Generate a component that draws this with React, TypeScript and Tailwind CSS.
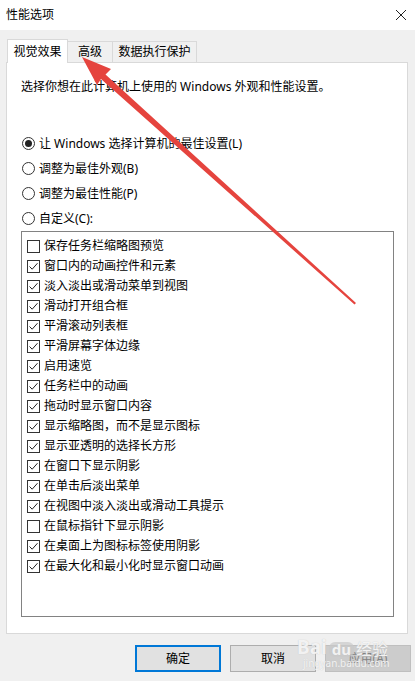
import React from "react";

const items: [string, boolean][] = [
  ["保存任务栏缩略图预览", false],
  ["窗口内的动画控件和元素", true],
  ["淡入淡出或滑动菜单到视图", true],
  ["滑动打开组合框", true],
  ["平滑滚动列表框", true],
  ["平滑屏幕字体边缘", true],
  ["启用速览", true],
  ["任务栏中的动画", true],
  ["拖动时显示窗口内容", true],
  ["显示缩略图，而不是显示图标", true],
  ["显示亚透明的选择长方形", true],
  ["在窗口下显示阴影", true],
  ["在单击后淡出菜单", true],
  ["在视图中淡入淡出或滑动工具提示", true],
  ["在鼠标指针下显示阴影", false],
  ["在桌面上为图标标签使用阴影", true],
  ["在最大化和最小化时显示窗口动画", true],
];

const radios: [string, boolean][] = [
  ["让 Windows 选择计算机的最佳设置(L)", true],
  ["调整为最佳外观(B)", false],
  ["调整为最佳性能(P)", false],
  ["自定义(C):", false],
];

function Radio({ checked }: { checked: boolean }) {
  return (
    <span className="flex h-[13px] w-[13px] items-center justify-center rounded-full border border-[#333]">
      {checked && <span className="h-[7px] w-[7px] rounded-full bg-[#222]" />}
    </span>
  );
}

function Checkbox({ checked }: { checked: boolean }) {
  return (
    <span className="flex h-[13px] w-[13px] shrink-0 items-center justify-center border border-[#333] bg-white">
      {checked && (
        <svg width="11" height="11" viewBox="0 0 11 11">
          <path d="M1.5 5.5 L4.2 8.2 L9.5 2.2" fill="none" stroke="#222" strokeWidth="1" />
        </svg>
      )}
    </span>
  );
}

export default function App() {
  return (
    <div className="relative h-[681px] w-[415px] overflow-hidden bg-[#f0f0f0] font-['Noto_Sans','Noto_Sans_CJK_SC',sans-serif] text-[12px] text-black">
      {/* title bar */}
      <div className="flex h-[30px] items-center justify-between bg-white pl-[6px] pr-[8px]">
        <span className="leading-none">性能选项</span>
        <svg width="12" height="12" viewBox="0 0 12 12">
          <path d="M1 1 L11 11 M11 1 L1 11" stroke="#222" strokeWidth="1" />
        </svg>
      </div>

      {/* tabs */}
      <div className="mt-[9px] flex h-[23px] items-end pl-[7px]">
        <div className="z-10 -mb-px flex h-[24px] w-[61px] items-center justify-center border border-b-0 border-[#d9d9d9] bg-white">
          视觉效果
        </div>
        <div className="flex h-[21px] w-[45px] items-center justify-center border border-b-0 border-l-0 border-[#d9d9d9]">
          高级
        </div>
        <div className="flex h-[21px] w-[84px] items-center justify-center border border-b-0 border-l-0 border-[#d9d9d9]">
          数据执行保护
        </div>
      </div>

      {/* panel */}
      <div className="ml-[6px] flex h-[572px] w-[402px] flex-col border border-[#d9d9d9] bg-white pl-[14px]">
        <div className="mt-[14px] flex h-[20px] items-center">
          选择你想在此计算机上使用的 Windows 外观和性能设置。
        </div>
        <div className="mt-[34px] flex flex-col">
          {radios.map(([label, on]) => (
            <div key={label} className="flex h-[25px] items-center gap-[4px] pl-[1px]">
              <Radio checked={on} />
              <span>{label}</span>
            </div>
          ))}
        </div>
        <div className="flex h-[386px] w-[373px] flex-col border border-[#828282] pt-[4px]">
          {items.map(([label, on]) => (
            <div key={label} className="flex h-[20px] items-center gap-[4px] pl-[5px]">
              <Checkbox checked={on} />
              <span>{label}</span>
            </div>
          ))}
        </div>
      </div>

      {/* buttons */}
      <div className="mt-[11px] flex gap-[9px] pl-[135px]">
        <button className="flex h-[27px] w-[86px] items-center justify-center border-2 border-[#0078d7] bg-[#e1e1e1]">
          确定
        </button>
        <button className="flex h-[27px] w-[86px] items-center justify-center border border-[#adadad] bg-[#e1e1e1]">
          取消
        </button>
        <button className="flex h-[27px] w-[86px] items-center justify-center border border-[#bfbfbf] bg-[#cccccc] text-[#838383]">
          应用(A)
        </button>
      </div>

      {/* baidu watermark */}
      <div className="pointer-events-none absolute left-[297px] top-[638px] flex flex-col items-start text-white/80 [text-shadow:0_0_1px_#bbb]">
        <div className="flex items-end gap-[2px] leading-none">
          <span className="text-[19px] font-bold">Bai</span>
          <span className="rounded-[6px] bg-[#c9c9c9]/70 px-[3px] text-[15px] font-bold">du</span>
          <span className="text-[16px]">经验</span>
        </div>
        <span className="mt-[1px] pl-[6px] text-[10px] leading-none">jingyan.baidu.com</span>
      </div>

      {/* red arrow */}
      <svg className="pointer-events-none absolute left-0 top-0" width="415" height="681" viewBox="0 0 415 681">
        <polygon
          points="82,57 111,69 105.5,74.5 356,303 354.5,304.5 101,79 97,85"
          fill="#e5443e"
        />
      </svg>
    </div>
  );
}
